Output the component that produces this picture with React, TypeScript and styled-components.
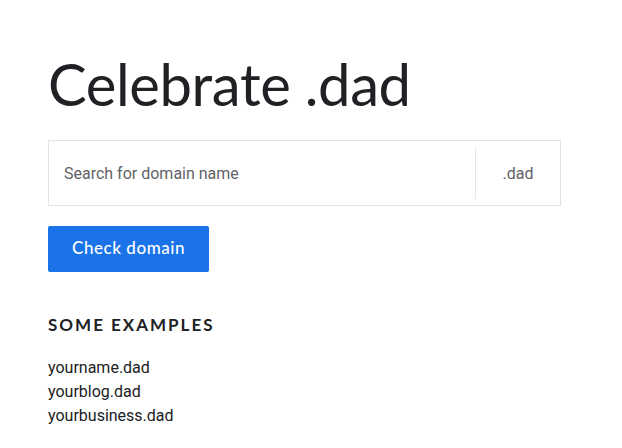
import styled, {createGlobalStyle} from 'styled-components';

const GlobalStyle = createGlobalStyle`
    body {
        margin: 0;
        background: #fff;
        font-family: Roboto, "Liberation Sans", sans-serif;
        color: #202124;
    }
`;

const Page = styled.div`
    padding: 48px 48px 0 48px;
    width: 513px;
`;

const Title = styled.h1`
    font-family: Lato, "Open Sans", sans-serif;
    font-weight: 400;
    font-size: 58px;
    line-height: 72px;
    letter-spacing: -0.4px;
    margin: 0 0 20px 0;
    color: #202124;
`;

const SearchBox = styled.div`
    display: flex;
    align-items: stretch;
    height: 64px;
    border: 1px solid #e3e3e3;
`;

const SearchInput = styled.input`
    flex: 1;
    border: none;
    outline: none;
    padding: 0 15px;
    font-family: Roboto, sans-serif;
    font-size: 16px;
    color: #202124;
    background: transparent;
    &::placeholder {
        color: #5f6368;
    }
`;

const Tld = styled.div`
    width: 84px;
    margin: 6px 0;
    border-left: 1px solid #e8e8e8;
    display: flex;
    align-items: center;
    justify-content: center;
    font-size: 16px;
    color: #5f6368;
`;

const CheckButton = styled.button`
    margin-top: 20px;
    height: 46px;
    padding: 0 24px 3px 24px;
    border: none;
    border-radius: 2px;
    background: #1a73e8;
    color: #fff;
    font-family: Lato, "Open Sans", sans-serif;
    font-size: 17px;
    font-weight: 500;
    letter-spacing: 0.55px;
    cursor: pointer;
`;

const SectionLabel = styled.h2`
    margin: 42px 0 21px 0;
    font-family: Lato, "Open Sans", sans-serif;
    font-size: 17px;
    font-weight: 700;
    letter-spacing: 2px;
    text-transform: uppercase;
    color: #202124;
`;

const ExampleList = styled.ul`
    list-style: none;
    margin: 0;
    padding: 0;
`;

const Example = styled.li`
    font-size: 16px;
    line-height: 24px;
    color: #202124;
`;

const examples = ['yourname.dad', 'yourblog.dad', 'yourbusiness.dad'];

export default function App() {
    return (
        <>
            <GlobalStyle />
            <Page>
                <Title>Celebrate .dad</Title>
                <SearchBox>
                    <SearchInput placeholder="Search for domain name" />
                    <Tld>.dad</Tld>
                </SearchBox>
                <CheckButton>Check domain</CheckButton>
                <SectionLabel>Some examples</SectionLabel>
                <ExampleList>
                    {examples.map(e => <Example key={e}>{e}</Example>)}
                </ExampleList>
            </Page>
        </>
    );
}
